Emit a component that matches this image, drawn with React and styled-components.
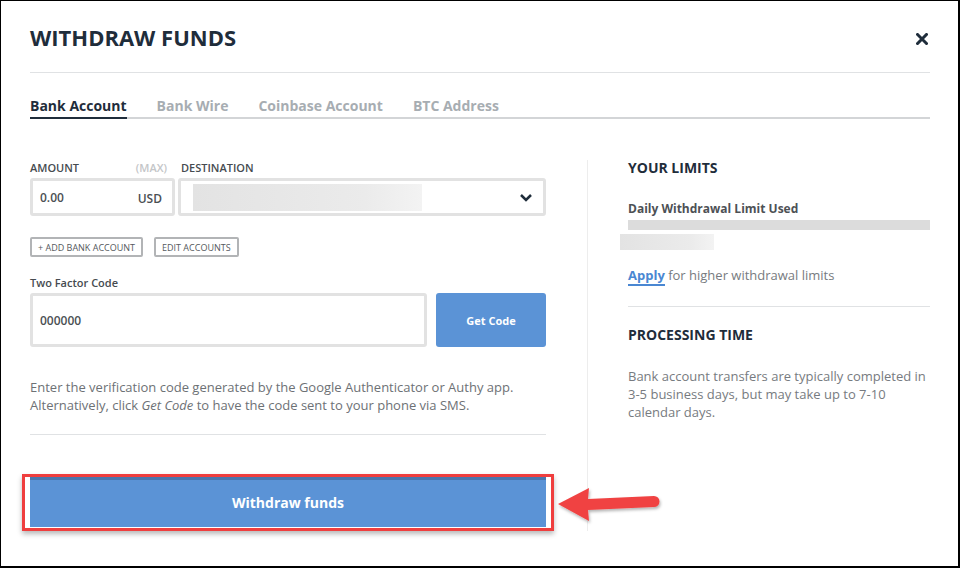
import React from "react";
import styled, { createGlobalStyle } from "styled-components";

const COLORS = {
  ink: "#1f2d3b",
  text: "#464b50",
  muted: "#777b80",
  faint: "#a7adb2",
  line: "#e0e2e4",
  field: "#e2e2e2",
  blue: "#5b93d6",
  red: "#ef3e3e",
};

const GlobalStyle = createGlobalStyle`
  body {
    margin: 0;
    font-family: "Open Sans", "Liberation Sans", sans-serif;
    background: #fff;
  }
`;

const Frame = styled.div`
  position: relative;
  box-sizing: border-box;
  width: 960px;
  height: 568px;
  border: solid #000;
  border-width: 1px 2px 2px 1px;
  padding: 0 28px 0 29px;
  background: #fff;
  display: flex;
  flex-direction: column;
`;

const Header = styled.header`
  box-sizing: border-box;
  height: 72px;
  padding-top: 21px;
  border-bottom: 1px solid ${COLORS.line};
  display: flex;
  justify-content: space-between;
  align-items: flex-start;
`;

const Title = styled.h1`
  margin: 0;
  font-size: 22px;
  line-height: 30px;
  font-weight: 700;
  color: ${COLORS.ink};
`;

const Close = styled.button`
  border: 0;
  background: none;
  padding: 0;
  margin: 11px 2px 0 0;
  width: 12px;
  height: 12px;
  display: flex;
  cursor: pointer;
`;

const TabBar = styled.nav`
  display: flex;
  gap: 30px;
  padding-top: 23px;
  border-bottom: 2px solid #d3d5d7;
`;

const Tab = styled.div`
  font-size: 14px;
  line-height: 20px;
  font-weight: 700;
  padding-bottom: 1px;
  margin-bottom: -2px;
  border-bottom: 2px solid ${(p) => (p.$active ? COLORS.ink : "transparent")};
  color: ${(p) => (p.$active ? COLORS.ink : COLORS.faint)};
`;

const Body = styled.div`
  display: flex;
  padding-top: 41px;
`;

const LeftCol = styled.section`
  width: 516px;
  flex: none;
  display: flex;
  flex-direction: column;
`;

const RightCol = styled.aside`
  flex: 1;
  margin-left: 41px;
  padding-left: 40px;
  border-left: 1px solid #ededed;
  display: flex;
  flex-direction: column;
`;

const FieldGrid = styled.div`
  display: grid;
  grid-template-columns: 145px 1fr;
  column-gap: 3px;
  row-gap: 2px;
`;

const Label = styled.div`
  display: flex;
  justify-content: space-between;
  font-size: 11px;
  line-height: 16px;
  font-weight: 600;
  color: ${COLORS.text};
  padding: ${(p) => (p.$indent ? "0 0 0 3px" : "0 8px 0 0")};
`;

const Max = styled.span`
  color: #c4c6c8;
`;

const Box = styled.div`
  box-sizing: border-box;
  height: ${(p) => p.$h || 38}px;
  border: 3px solid ${COLORS.field};
  border-radius: 3px;
  display: flex;
  align-items: center;
  justify-content: space-between;
  padding: 0 ${(p) => p.$pr || 10}px 0 ${(p) => p.$pl || 7}px;
`;

const Value = styled.span`
  font-size: 12px;
  font-weight: 600;
  color: #4b4f53;
  padding-top: ${(p) => p.$drop || 0}px;
`;

const Blurred = styled.div`
  width: ${(p) => p.$w}px;
  height: ${(p) => p.$h}px;
  margin-left: ${(p) => p.$shift || 0}px;
  background: linear-gradient(90deg, #e3e3e3, #ebebeb 75%, #f3f3f3);
`;

const ButtonRow = styled.div`
  display: flex;
  gap: 11px;
  margin-top: 21px;
`;

const SmallButton = styled.button`
  box-sizing: border-box;
  height: 20px;
  padding: 0 6px;
  border: 2px solid #b2b4b6;
  border-radius: 2px;
  background: #fff;
  font-family: inherit;
  font-size: 9px;
  color: #55595d;
  text-transform: uppercase;
`;

const SubLabel = styled.div`
  margin-top: 18px;
  font-size: 11px;
  line-height: 16px;
  font-weight: 600;
  color: ${COLORS.text};
`;

const CodeRow = styled.div`
  display: flex;
  gap: 9px;
  margin-top: 2px;
`;

const CodeInput = styled(Box)`
  flex: 1;
  justify-content: flex-start;
`;

const GetCode = styled.button`
  width: 110px;
  height: 54px;
  border: 0;
  border-radius: 3px;
  background: ${COLORS.blue};
  color: #fff;
  font-family: inherit;
  font-size: 11px;
  font-weight: 700;
`;

const Help = styled.p`
  margin: 31px 0 0;
  font-size: 13px;
  line-height: 18px;
  color: #6d7175;
  em {
    font-style: italic;
  }
`;

const Rule = styled.hr`
  margin: ${(p) => p.$m || "20px 0 0"};
  border: 0;
  border-top: 1px solid ${COLORS.line};
  width: 100%;
`;

const Highlight = styled.div`
  margin: 39px -8px 0;
  padding: 0 5px 1px;
  border: 3px solid ${COLORS.red};
  box-shadow: 0 3px 5px rgba(0, 0, 0, 0.28);
`;

const Withdraw = styled.button`
  display: block;
  width: 100%;
  height: 50px;
  border: 0;
  box-shadow: inset 0 3px 0 #4a76ad;
  background: ${COLORS.blue};
  color: #fff;
  font-family: inherit;
  font-size: 14px;
  font-weight: 700;
`;

const Arrow = styled.svg`
  position: absolute;
  left: 554px;
  top: 482px;
`;

const Heading = styled.h2`
  margin: ${(p) => p.$m || 0};
  font-size: 14px;
  line-height: 16px;
  font-weight: 700;
  color: ${COLORS.ink};
`;

const Stat = styled.div`
  margin-top: 25px;
  font-size: 12px;
  line-height: 16px;
  font-weight: 700;
  color: #4d5155;
`;

const Bar = styled.div`
  height: 10px;
  margin: 3px 0 4px;
  background: #dcdcdc;
`;

const Note = styled.p`
  margin: ${(p) => p.$m || 0};
  font-size: 13px;
  line-height: 18px;
  color: ${COLORS.muted};
`;

const Link = styled.a`
  color: #4a87d2;
  font-weight: 700;
  text-decoration: none;
  border-bottom: 2px solid #4a87d2;
`;

const tabs = ["Bank Account", "Bank Wire", "Coinbase Account", "BTC Address"];

export default function App() {
  return (
    <>
      <GlobalStyle />
      <Frame>
        <Header>
          <Title>WITHDRAW FUNDS</Title>
          <Close aria-label="Close">
            <svg width="12" height="12" viewBox="0 0 12 12">
              <path d="M1.5 1.5 L10.5 10.5 M10.5 1.5 L1.5 10.5" stroke={COLORS.ink} strokeWidth="3" strokeLinecap="square" />
            </svg>
          </Close>
        </Header>

        <TabBar>
          {tabs.map((t, i) => (
            <Tab key={t} $active={i === 0}>{t}</Tab>
          ))}
        </TabBar>

        <Body>
          <LeftCol>
            <FieldGrid>
              <Label>
                AMOUNT <Max>(MAX)</Max>
              </Label>
              <Label $indent>DESTINATION</Label>
              <Box>
                <Value>0.00</Value>
                <Value $drop={3}>USD</Value>
              </Box>
              <Box $pl={12}>
                <Blurred $w={229} $h={27} />
                <svg width="14" height="9" viewBox="0 0 14 9">
                  <path d="M2 2 L7 7 L12 2" fill="none" stroke={COLORS.ink} strokeWidth="2.5" />
                </svg>
              </Box>
            </FieldGrid>

            <ButtonRow>
              <SmallButton>+ Add Bank Account</SmallButton>
              <SmallButton>Edit Accounts</SmallButton>
            </ButtonRow>

            <SubLabel>Two Factor Code</SubLabel>
            <CodeRow>
              <CodeInput $h={54}>
                <Value>000000</Value>
              </CodeInput>
              <GetCode>Get Code</GetCode>
            </CodeRow>

            <Help>
              Enter the verification code generated by the Google Authenticator or Authy app.
              Alternatively, click <em>Get Code</em> to have the code sent to your phone via SMS.
            </Help>
            <Rule />

            <Highlight>
              <Withdraw>Withdraw funds</Withdraw>
            </Highlight>
          </LeftCol>

          <RightCol>
            <Heading>YOUR LIMITS</Heading>
            <Stat>Daily Withdrawal Limit Used</Stat>
            <Bar />
            <Blurred $w={94} $h={16} $shift={-8} />
            <Note $m="16px 0 0">
              <Link href="#">Apply</Link> for higher withdrawal limits
            </Note>
            <Rule $m="22px 0 0" />
            <Heading $m="20px 0 0">PROCESSING TIME</Heading>
            <Note $m="24px 0 0">
              Bank account transfers are typically completed in 3-5 business days, but may take up to
              7-10 calendar days.
            </Note>
          </RightCol>
        </Body>

        <Arrow width="108" height="46" viewBox="0 0 108 46">
          <defs>
            <filter id="arrowShadow" x="-10%" y="-20%" width="130%" height="160%">
              <feDropShadow dx="1" dy="2" stdDeviation="1.5" floodColor="#000" floodOpacity="0.3" />
            </filter>
          </defs>
          <path
            d="M3 21 L34 5 L33 16 L99 13 A5.5 5.5 0 0 1 99 24 L33 27 L34 38 Z"
            fill="#f04343"
            filter="url(#arrowShadow)"
          />
        </Arrow>
      </Frame>
    </>
  );
}
